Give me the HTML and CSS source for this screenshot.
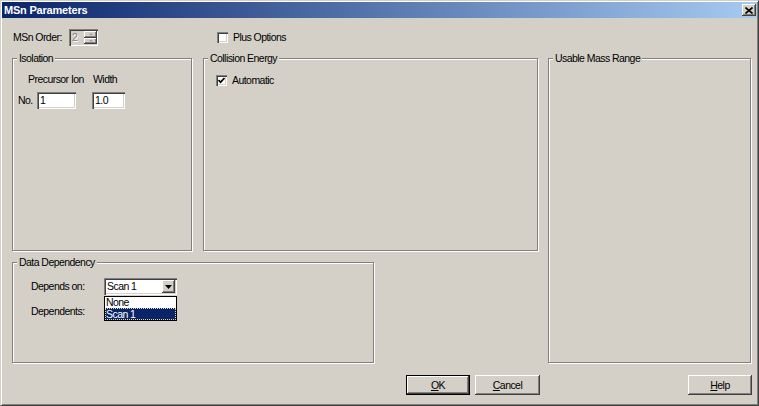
FILE: index.html
```html
<!DOCTYPE html>
<html>
<head>
    <meta charset='utf-8'>
    <title>MSn Parameters</title>
    <link rel="stylesheet" href="styles.css">
</head>
<body>
<div id="dialog">
    <div id="titleBar">
        <span id="titleText">MSn Parameters</span>
        <span class="closeBtn">
            <svg width="8" height="7" viewBox="0 0 8 7"><path d="M0.5 0.5 L7.5 6.5 M7.5 0.5 L0.5 6.5" stroke="#000" stroke-width="1.6" fill="none"/></svg>
        </span>
    </div>
    <div id="client">
        <div class="topRow">
            <span class="msnLabel">MSn Order:</span>
            <div class="spinBox">
                <span class="spinValue">2</span>
                <div class="spinButtons">
                    <span class="spinBtn"><span class="arrowUp"></span></span>
                    <span class="spinBtn"><span class="arrowDown"></span></span>
                </div>
            </div>
            <div class="checkRow plusOptions">
                <span class="checkBox"></span>
                <span>Plus Options</span>
            </div>
        </div>

        <div class="mainArea">
            <div class="leftArea">
                <div class="topGroups">
                    <div class="group isoGroup">
                        <span class="groupCaption">Isolation</span>
                        <div class="isoHead">
                            <span class="precHead">Precursor Ion</span>
                            <span>Width</span>
                        </div>
                        <div class="isoRow">
                            <span class="noLabel">No.</span>
                            <div class="edit editPrec">1</div>
                            <div class="edit editWidth">1.0</div>
                        </div>
                    </div>
                    <div class="group collGroup">
                        <span class="groupCaption">Collision Energy</span>
                        <div class="checkRow collRow">
                            <span class="checkBox">
                                <svg width="7" height="7" viewBox="0 0 7 7"><path d="M0.5 3 L2.5 5.2 L6.5 1" stroke="#000" stroke-width="1.7" fill="none"/></svg>
                            </span>
                            <span>Automatic</span>
                        </div>
                    </div>
                </div>
                <div class="group depGroup">
                    <span class="groupCaption">Data Dependency</span>
                    <div class="depRow">
                        <span class="depLabel">Depends on:</span>
                        <div class="combo">
                            <span class="comboText">Scan 1</span>
                            <span class="comboBtn">
                                <svg width="7" height="4" viewBox="0 0 7 4"><polygon points="0,0 7,0 3.5,4" fill="#000"/></svg>
                            </span>
                            <div class="dropList">
                                <div class="dropItem">None</div>
                                <div class="dropItem selected">Scan 1</div>
                            </div>
                        </div>
                    </div>
                    <div class="depRow depRow2">
                        <span class="depLabel">Dependents:</span>
                    </div>
                </div>
            </div>
            <div class="group massGroup">
                <span class="groupCaption">Usable Mass Range</span>
            </div>
        </div>

        <div class="buttonRow">
            <span class="btn default"><u>O</u>K</span>
            <span class="btn cancelBtn"><u>C</u>ancel</span>
            <span class="btn helpBtn"><u>H</u>elp</span>
        </div>
    </div>
</div>
</body>
</html>
```

FILE: styles.css
```css
html, body {
    margin: 0;
    padding: 0;
    background-color: #d4d0c8;
}

body {
    font-family: "Liberation Sans", Arial, sans-serif;
    font-size: 10.5px;
    letter-spacing: -0.55px;
    line-height: 13px;
    color: #000;
}

#dialog {
    width: 759px;
    height: 406px;
    box-sizing: border-box;
    padding: 1px;
    border: 1px solid;
    border-color: #d4d0c8 #404040 #404040 #d4d0c8;
    box-shadow: inset 1px 1px 0 #fff, inset -1px -1px 0 #808080;
}

#titleBar {
    height: 16px;
    display: flex;
    align-items: center;
    justify-content: space-between;
    padding: 0 1px 0 2px;
    background: linear-gradient(to right, #0a246a, #a6caf0);
}

#titleText {
    color: #fff;
    font-family: "Liberation Sans", sans-serif;
    font-weight: bold;
    font-size: 11px;
    letter-spacing: -0.2px;
}

.closeBtn {
    width: 14px;
    height: 12px;
    box-sizing: border-box;
    display: flex;
    align-items: center;
    justify-content: center;
    background: #d4d0c8;
    box-shadow: inset -1px -1px 0 #404040, inset 1px 1px 0 #fff, inset -2px -2px 0 #808080;
}

#client {
    padding: 11px 5px 0 10px;
}

/* top row */
.topRow {
    display: flex;
    align-items: center;
    height: 17px;
}

.msnLabel {
    width: 56px;
    margin-left: 1px;
}

.spinBox {
    width: 29px;
    height: 17px;
    box-sizing: border-box;
    padding: 2px 1px 2px 2px;
    display: flex;
    justify-content: space-between;
    background: #d4d0c8;
    box-shadow: inset 1px 1px 0 #808080, inset 2px 2px 0 #404040, inset -1px -1px 0 #fff;
}

.spinValue {
    color: #808080;
    text-shadow: 1px 1px 0 #fff;
    padding-left: 1px;
}

.spinButtons {
    width: 13px;
    display: flex;
    flex-direction: column;
}

.spinBtn {
    flex: 1;
    display: flex;
    align-items: center;
    justify-content: center;
    box-shadow: inset -1px -1px 0 #404040, inset 1px 1px 0 #fff, inset -2px -2px 0 #808080;
}

.arrowUp, .arrowDown {
    width: 0;
    height: 0;
    border-left: 2px solid transparent;
    border-right: 2px solid transparent;
}
.arrowUp {
    border-bottom: 2px solid #a0a0a0;
}
.arrowDown {
    border-top: 2px solid #a0a0a0;
}

.checkRow {
    display: flex;
    align-items: center;
    gap: 5px;
}

.plusOptions {
    margin-left: 119px;
}

.checkBox {
    width: 11px;
    height: 11px;
    box-sizing: border-box;
    display: flex;
    align-items: center;
    justify-content: center;
    background: #fff;
    box-shadow: inset 1px 1px 0 #808080, inset 2px 2px 0 #404040, inset -1px -1px 0 #fff, inset -2px -2px 0 #d4d0c8;
}

/* group boxes */
.mainArea {
    display: flex;
    gap: 10px;
    margin-top: 12px;
}

.leftArea {
    width: 526px;
    display: flex;
    flex-direction: column;
}

.topGroups {
    display: flex;
    gap: 11px;
}

.group {
    position: relative;
    box-sizing: border-box;
    border: 1px solid #808080;
    box-shadow: 1px 1px 0 #fff, inset 1px 1px 0 #fff;
}

.groupCaption {
    position: absolute;
    top: -7px;
    left: 4px;
    padding: 0 2px;
    background: #d4d0c8;
    white-space: nowrap;
}

.isoGroup {
    width: 180px;
    height: 193px;
}

.collGroup {
    width: 335px;
    height: 193px;
}

.depGroup {
    width: 362px;
    height: 101px;
    margin-top: 11px;
}

.massGroup {
    width: 203px;
}

/* isolation */
.isoHead {
    display: flex;
    margin: 14px 0 0 15px;
    white-space: nowrap;
}

.precHead {
    width: 65px;
}

.isoRow {
    display: flex;
    align-items: center;
    margin: 6px 0 0 5px;
}

.noLabel {
    width: 19px;
}

.edit {
    height: 17px;
    box-sizing: border-box;
    padding: 2px 0 0 3px;
    background: #fff;
    box-shadow: inset 1px 1px 0 #808080, inset 2px 2px 0 #404040, inset -1px -1px 0 #fff, inset -2px -2px 0 #d4d0c8;
}

.editPrec {
    width: 39px;
}

.editWidth {
    width: 33px;
    margin-left: 16px;
}

/* collision */
.collRow {
    margin: 15px 0 0 12px;
}

/* data dependency */
.depRow {
    display: flex;
    align-items: center;
    margin: 15px 0 0 18px;
}

.depRow2 {
    margin-top: 10px;
}

.depLabel {
    width: 73px;
}

.combo {
    position: relative;
    width: 73px;
    height: 17px;
    box-sizing: border-box;
    padding: 2px;
    display: flex;
    justify-content: space-between;
    background: #fff;
    box-shadow: inset 1px 1px 0 #808080, inset 2px 2px 0 #404040, inset -1px -1px 0 #fff, inset -2px -2px 0 #d4d0c8;
}

.comboText {
    padding-left: 1px;
}

.comboBtn {
    width: 13px;
    height: 13px;
    display: flex;
    align-items: center;
    justify-content: center;
    background: #d4d0c8;
    box-shadow: inset -1px -1px 0 #404040, inset 1px 1px 0 #fff, inset -2px -2px 0 #808080;
}

.dropList {
    position: absolute;
    top: 18px;
    left: 0;
    width: 73px;
    box-sizing: border-box;
    border: 1px solid #000;
    background: #fff;
    z-index: 2;
}

.dropItem {
    height: 11px;
    line-height: 11px;
    padding-left: 1px;
}

.dropItem.selected {
    height: 12px;
    line-height: 12px;
    color: #fff;
    background: #0a246a;
    outline: 1px dotted #e8d890;
    outline-offset: -1px;
}

/* buttons */
.buttonRow {
    display: flex;
    margin-top: 12px;
    padding-left: 394px;
}

.btn {
    width: 64px;
    height: 20px;
    box-sizing: border-box;
    display: flex;
    align-items: center;
    justify-content: center;
    background: #d4d0c8;
    box-shadow: inset -1px -1px 0 #404040, inset 1px 1px 0 #fff, inset -2px -2px 0 #808080;
}

.btn.default {
    border: 1px solid #000;
}

.cancelBtn {
    width: 65px;
    margin-left: 5px;
}

.helpBtn {
    margin-left: auto;
}
```
